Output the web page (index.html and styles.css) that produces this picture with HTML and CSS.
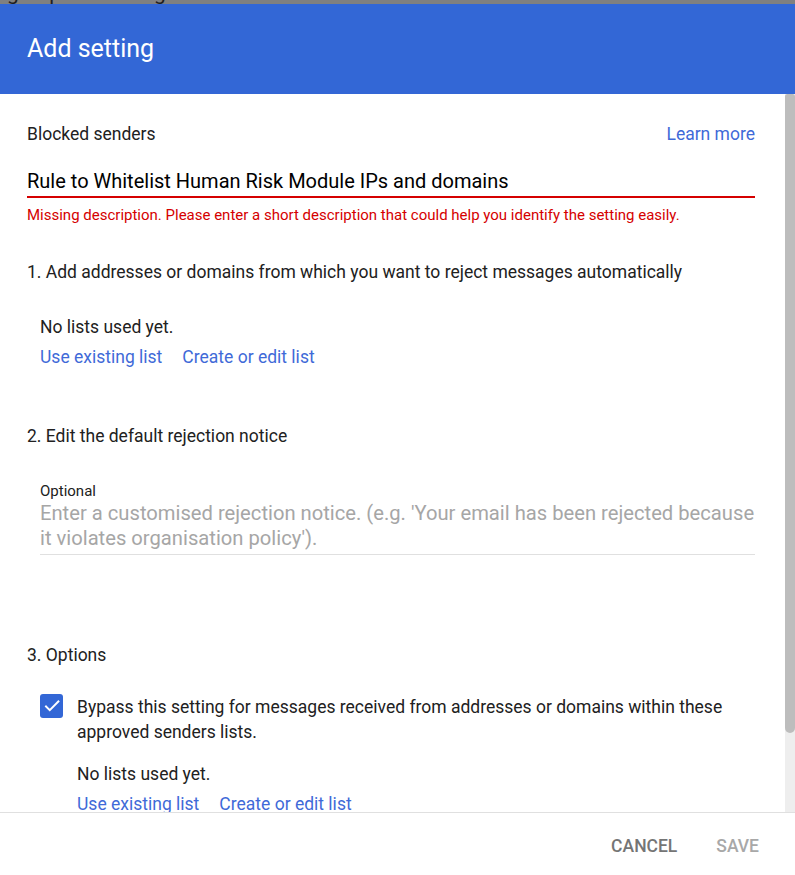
FILE: index.html
```html
<!DOCTYPE html>
<html>
<head>
<meta charset="utf-8">
<link rel="stylesheet" href="styles.css">
</head>
<body>
<div class="page">
  <div class="scrim"><span class="scrim-text">groups of settings</span></div>
  <div class="dialog">
    <header class="dlg-header">Add setting</header>
    <div class="dlg-main">
      <main class="dlg-body">
        <div class="row-between">
          <span class="label">Blocked senders</span>
          <a class="link">Learn more</a>
        </div>
        <div class="name-field">
          <div class="name-value">Rule to Whitelist Human Risk Module IPs and domains</div>
        </div>
        <div class="error">Missing description. Please enter a short description that could help you identify the setting easily.</div>

        <div class="section-title s1">1. Add addresses or domains from which you want to reject messages automatically</div>
        <div class="lists">
          <div class="no-lists">No lists used yet.</div>
          <div class="link-row"><a class="link">Use existing list</a><a class="link">Create or edit list</a></div>
        </div>

        <div class="section-title s2">2. Edit the default rejection notice</div>
        <div class="notice">
          <div class="notice-label">Optional</div>
          <div class="notice-input">Enter a customised rejection notice. (e.g. 'Your email has been rejected because it violates organisation policy').</div>
        </div>

        <div class="section-title s3">3. Options</div>
        <div class="check-row">
          <span class="checkbox"><svg width="18" height="18" viewBox="0 0 24 24"><path d="M4 12.5l5 5L20.5 6" fill="none" stroke="#fff" stroke-width="2.6" stroke-linecap="square"/></svg></span>
          <div class="check-text">Bypass this setting for messages received from addresses or domains within these approved senders lists.</div>
        </div>
        <div class="lists lists-inner">
          <div class="no-lists">No lists used yet.</div>
          <div class="link-row"><a class="link">Use existing list</a><a class="link">Create or edit list</a></div>
        </div>
      </main>
      <div class="scrollbar"><div class="thumb"></div></div>
    </div>
    <footer class="dlg-footer">
      <button class="btn btn-cancel">CANCEL</button>
      <button class="btn btn-save">SAVE</button>
    </footer>
  </div>
</div>
</body>
</html>
```
FILE: styles.css
```css
html, body {
  margin: 0;
  padding: 0;
  width: 795px;
  height: 875px;
  overflow: hidden;
  font-family: Roboto, "Liberation Sans", Arial, sans-serif;
  color: #212121;
  background: #fff;
}
.page {
  display: flex;
  flex-direction: column;
  width: 795px;
  height: 875px;
}
.scrim {
  height: 4px;
  background: #808080;
  overflow: hidden;
  flex: none;
}
.scrim-text {
  display: block;
  margin-top: -17px;
  padding-left: 7px;
  font-size: 21px;
  line-height: 20px;
  color: #1e1e1e;
}
.dialog {
  flex: 1;
  display: flex;
  flex-direction: column;
  min-height: 0;
  background: #fff;
}
.dlg-header {
  flex: none;
  height: 90px;
  background: #3367d6;
  color: #fff;
  font-size: 25px;
  line-height: 90px;
  padding-left: 27px;
}
.dlg-main {
  flex: 1;
  min-height: 0;
  display: flex;
}
.dlg-body {
  flex: 1;
  min-width: 0;
  overflow: hidden;
  padding: 28px 30px 0 27px;
  font-size: 17.5px;
  line-height: 24px;
}
.scrollbar {
  flex: none;
  width: 10px;
  background: #eeeeee;
}
.thumb {
  height: 639px;
  background: #bdbdbd;
  border-radius: 3px 3px 6px 6px;
}
.row-between {
  display: flex;
  justify-content: space-between;
  align-items: center;
}
.link {
  color: #3f6ad8;
  cursor: pointer;
}
.name-field {
  margin-top: 24px;
  border-bottom: 2px solid #d50000;
  padding-bottom: 3px;
}
.name-value {
  font-size: 20px;
  line-height: 23px;
  color: #000;
}
.error {
  margin-top: 9px;
  font-size: 15px;
  line-height: 16px;
  color: #d50000;
}
.section-title.s1 { margin-top: 37px; }
.section-title.s2 { margin-top: 55px; }
.section-title.s3 { margin-top: 88px; }
.lists {
  margin-top: 31px;
  padding-left: 13px;
}
.link-row {
  display: flex;
  gap: 20px;
  margin-top: 6px;
}
.notice {
  margin-top: 35px;
  padding-left: 13px;
}
.notice-label {
  font-size: 15px;
  line-height: 16px;
  color: #212121;
}
.notice-input {
  margin-top: 2px;
  font-size: 20.2px;
  line-height: 25px;
  color: #a6a6a6;
  padding-bottom: 3px;
  border-bottom: 1px solid #e0e0e0;
}
.check-row {
  display: flex;
  align-items: flex-start;
  margin-top: 28px;
  padding-left: 13px;
}
.checkbox {
  flex: none;
  width: 23px;
  height: 24px;
  border-radius: 3px;
  background: #3367d6;
  display: flex;
  align-items: center;
  justify-content: center;
  margin-top: -1px;
}
.check-text {
  margin-left: 14px;
  line-height: 25px;
}
.lists-inner {
  margin-top: 17px;
  padding-left: 50px;
}
.dlg-footer {
  flex: none;
  height: 63px;
  box-sizing: border-box;
  border-top: 1px solid #e0e0e0;
  display: flex;
  justify-content: flex-end;
  align-items: center;
  padding-right: 28px;
  padding-top: 4px;
  gap: 23px;
}
.btn {
  border: none;
  background: none;
  font-family: Roboto, "Liberation Sans", Arial, sans-serif;
  font-size: 17.5px;
  font-weight: 500;
  padding: 8px 8px;
  cursor: pointer;
}
.btn-cancel { color: #757575; }
.btn-save { color: #a8a8a8; }
```
